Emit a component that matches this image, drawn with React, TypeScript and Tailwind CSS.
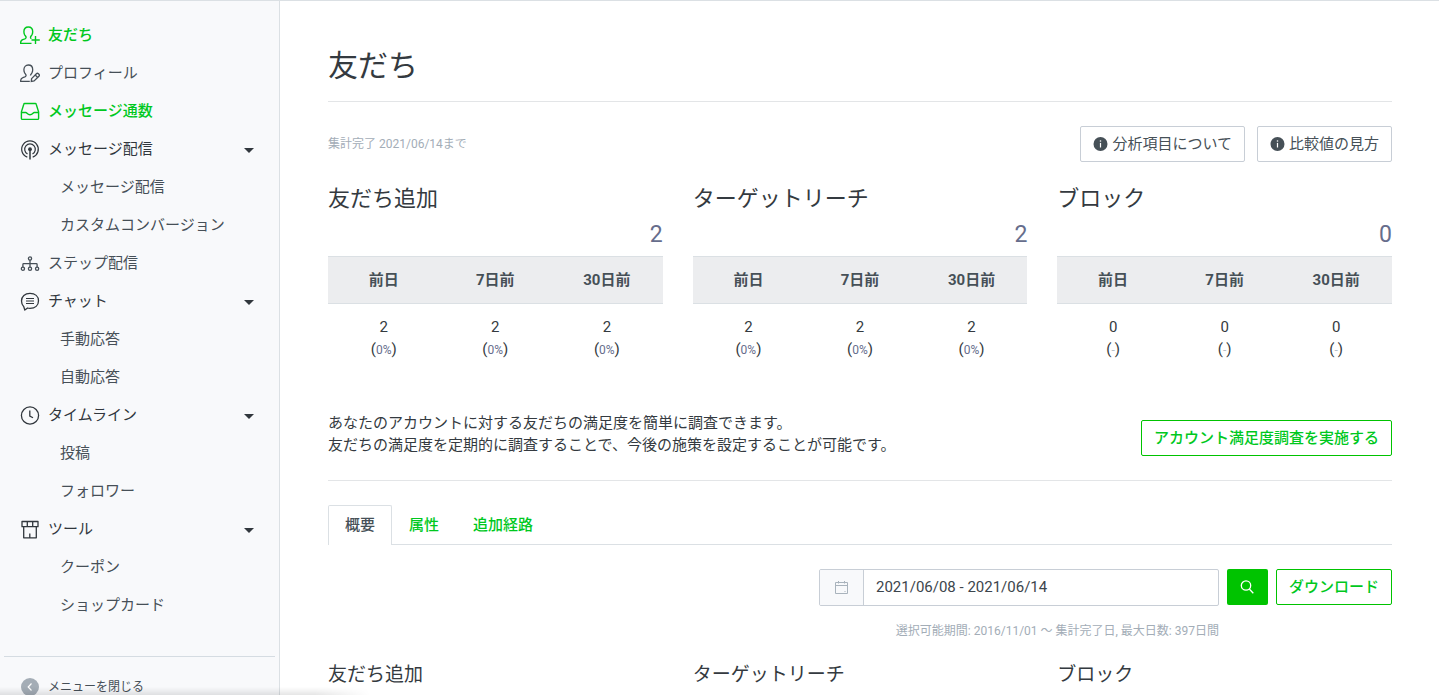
import type { ReactNode } from "react";

type IconProps = { className?: string };

function FriendIcon({ className }: IconProps) {
  return (
    <svg viewBox="0 0 20 20" className={className} fill="none" stroke="currentColor" strokeWidth="1.4">
      <path d="M11.5 17.4H.7v-1.200c0-2 1.300-2.300 3-2.900 1.600-.5 2.400-1 2.400-1.900 0-.9-.7-1.400-1.300-2.300-.6-1-.9-2-.9-3.300C3.900 3 5.700 1 8.300 1s4.400 2 4.400 4.800c0 1.300-.3 2.300-.9 3.300-.6.900-1.300 1.400-1.300 2.300 0 .6.300 1 .9 1.300" />
      <path d="M15.500 10v8M11.500 14h8.300" />
    </svg>
  );
}

function ProfileIcon({ className }: IconProps) {
  return (
    <svg viewBox="0 0 20 20" className={className} fill="none" stroke="currentColor" strokeWidth="1.3">
      <path d="M9.800 17.400H.7v-1.200c0-2 1.300-2.300 3-2.900 1.600-.5 2.400-1 2.400-1.900 0-.9-.7-1.400-1.300-2.300-.6-1-.9-2-.9-3.300C3.900 3 5.700 1 8.300 1s4.400 2 4.400 4.800c0 1.300-.3 2.300-.9 3.300-.6.900-1.300 1.400-1.300 2.300" />
      <path d="M11.600 14.600l4.800-4.800c.6-.6 1.400-.6 2 0l.5.500c.6.600.6 1.400 0 2L14.100 17l-2.800.4z" />
      <path d="M15.200 11l2.500 2.500" />
    </svg>
  );
}

function InboxIcon({ className }: IconProps) {
  return (
    <svg viewBox="0 0 20 20" className={className} fill="none" stroke="currentColor" strokeWidth="1.4" strokeLinejoin="round">
      <path d="M4.700 1.500h10.600c.5 0 .8.300.9.700l2.400 7.700v6.500c0 .6-.4 1-1 1H2.400c-.6 0-1-.4-1-1V9.900l2.400-7.700c.1-.4.400-.7.900-.7z" />
      <path d="M1.600 10.500h4.200c1.200 0 1.500 2.200 4.200 2.200s3-2.200 4.200-2.200h4.200" />
    </svg>
  );
}

function BroadcastIcon({ className }: IconProps) {
  return (
    <svg viewBox="0 0 20 20" className={className} fill="none" stroke="currentColor" strokeWidth="1.200">
      <path d="M7.300 17.100a8.300 8.300 0 1 1 5.400 0" />
      <path d="M7.500 13.900a5.300 5.300 0 1 1 5 0" />
      <path d="M10 9v10.500" strokeWidth="1.500" />
      <circle cx="10" cy="9.200" r="1.900" fill="currentColor" stroke="none" />
    </svg>
  );
}

function StepIcon({ className }: IconProps) {
  return (
    <svg viewBox="0 0 20 20" className={className} fill="none" stroke="currentColor" strokeWidth="1.300">
      <circle cx="10" cy="4.500" r="1.600" />
      <circle cx="2.900" cy="14.700" r="1.600" />
      <circle cx="10" cy="14.700" r="1.600" />
      <circle cx="17.100" cy="14.700" r="1.600" />
      <path d="M10 6.100v7M2.900 13.100V10.400c0-.5.300-.8.800-.8h12.600c.5 0 .8.300.8.800v2.700" />
    </svg>
  );
}

function ChatIcon({ className }: IconProps) {
  return (
    <svg viewBox="0 0 20 20" className={className} fill="none" stroke="currentColor" strokeWidth="1.300" strokeLinejoin="round">
      <path d="M3.800 14.700C2.300 13.300 1.500 11.500 1.500 9c0-4.700 3.400-7.600 8.500-7.600s8.500 2.900 8.500 7.400-3.400 7.500-8.500 7.500c-.9 0-1.700-.1-2.400-.3l-2.800 2.100z" />
      <path d="M6 6.500h8M6 9h8M6 11.500h8" strokeWidth="1" />
    </svg>
  );
}

function ClockIcon({ className }: IconProps) {
  return (
    <svg viewBox="0 0 20 20" className={className} fill="none" stroke="currentColor" strokeWidth="1.300">
      <circle cx="10" cy="9.500" r="8.600" />
      <path d="M9.800 4.500v5.600l3.200 1.700" />
    </svg>
  );
}

function ShopIcon({ className }: IconProps) {
  return (
    <svg viewBox="0 0 20 20" className={className} fill="none" stroke="currentColor" strokeWidth="1.300" strokeLinejoin="round">
      <path d="M2 1.500h16v5.200H2zM7.300 1.500v5.200M12.700 1.500v5.200" />
      <path d="M3.700 6.700V17.800h12.600V6.700M9.800 17.500v-4" />
    </svg>
  );
}

function InfoIcon({ className }: IconProps) {
  return (
    <svg viewBox="0 0 15 15" className={className}>
      <circle cx="7.500" cy="7" r="7" fill="currentColor" />
      <path d="M7.500 5.900v4.600" stroke="#fff" strokeWidth="1.200" />
      <circle cx="7.500" cy="4" r=".8" fill="#fff" />
    </svg>
  );
}

type MenuItem = {
  label: string;
  icon?: (props: IconProps) => ReactNode;
  active?: boolean;
  children?: string[];
};

const menu: MenuItem[] = [
  { label: "友だち", icon: FriendIcon, active: true },
  { label: "プロフィール", icon: ProfileIcon },
  { label: "メッセージ通数", icon: InboxIcon, active: true },
  {
    label: "メッセージ配信",
    icon: BroadcastIcon,
    children: ["メッセージ配信", "カスタムコンバージョン"],
  },
  { label: "ステップ配信", icon: StepIcon },
  { label: "チャット", icon: ChatIcon, children: ["手動応答", "自動応答"] },
  { label: "タイムライン", icon: ClockIcon, children: ["投稿", "フォロワー"] },
  { label: "ツール", icon: ShopIcon, children: ["クーポン", "ショップカード"] },
];

const stats = [
  { title: "友だち追加", total: 2, rate: "0%" },
  { title: "ターゲットリーチ", total: 2, rate: "0%" },
  { title: "ブロック", total: 0, rate: "-" },
];

const periods = ["前日", "7日前", "30日前"];

function Sidebar() {
  return (
    <aside className="flex w-[280px] shrink-0 flex-col border-r border-[#dbe0e4] bg-[#f8f9fb] pt-[15px]">
      <nav>
        <ul>
          {menu.map(({ label, icon: Icon, active, children }) => (
            <li key={label}>
              {children ? (
                <button
                  type="button"
                  aria-expanded="true"
                  className="flex h-[38px] w-full items-center gap-2 pr-[25px] pl-5 text-left text-[#31373d]">
                  {Icon && <Icon className="mt-0.5 size-5 shrink-0" />}
                  <span className="flex-1">{label}</span>
                  <svg viewBox="0 0 10 5" className="mt-[3px] h-[5px] w-[10px]" fill="currentColor">
                    <path d="M0 0h10L5 5z" />
                  </svg>
                </button>
              ) : (
                <a
                  href="#"
                  className={`flex h-[38px] items-center gap-2 pl-5 ${active ? "font-medium text-[#00c81e]" : "text-[#464f57]"}`}>
                  {Icon && <Icon className="mt-0.5 size-5 shrink-0" />}
                  {label}
                </a>
              )}
              {children && (
                <ul>
                  {children.map((child) => (
                    <li key={child}>
                      <a href="#" className="flex h-[38px] items-center pl-[60px] text-[#464f57]">
                        {child}
                      </a>
                    </li>
                  ))}
                </ul>
              )}
            </li>
          ))}
        </ul>
      </nav>
      <div className="mx-1 mt-8 border-t border-[#d5dce2] pt-[19px]">
        <button type="button" className="flex items-center gap-2 pl-4 text-[12px] text-[#464f57]">
          <svg viewBox="0 0 20 20" className="size-5">
            <circle cx="10" cy="10" r="9" fill="#a4adb6" />
            <path d="M11.500 6.500L8.200 10l3.300 3.500" fill="none" stroke="#fff" strokeWidth="1.200" />
          </svg>
          メニューを閉じる
        </button>
      </div>
    </aside>
  );
}

function StatCard({ title, total, rate }: (typeof stats)[number]) {
  return (
    <section>
      <h2 className="text-[22px] leading-7">{title}</h2>
      <p className="mt-2 text-right text-[23px] leading-7 text-[#666d8c]">{total}</p>
      <table className="mt-[7px] w-full table-fixed text-center">
        <thead>
          <tr className="h-[47px] border-y border-[#dbe0e4] bg-[#ecedef] text-[#465057]">
            {periods.map((p) => (
              <th key={p} className="font-bold">
                {p}
              </th>
            ))}
          </tr>
        </thead>
        <tbody>
          <tr>
            {periods.map((p) => (
              <td key={p} className="py-3">
                {total}
                <br />(
                <span className={`text-[12px] ${rate === "-" ? "text-[#b7bfc7]" : "text-[#666d8c]"}`}>{rate}</span>)
              </td>
            ))}
          </tr>
        </tbody>
      </table>
    </section>
  );
}

export default function App() {
  return (
    <div className="relative flex h-screen overflow-hidden border-t border-[#dbe0e4] bg-white font-['Roboto','Noto_Sans_CJK_JP',sans-serif] text-[15px] leading-[22px] text-[#343a40]">
      <Sidebar />

      <main className="min-w-0 flex-1 pr-[47px] pl-12">
        <h1 className="border-b border-[#e3e5e7] pt-[47px] pb-[17px] text-[30px] leading-9">友だち</h1>

        <div className="mt-6 flex items-center justify-between">
          <p className="text-[12px] text-[#a3adb7]">集計完了 2021/06/14まで</p>
          <div className="flex gap-3">
            {["分析項目について", "比較値の見方"].map((label) => (
              <button
                key={label}
                type="button"
                className="flex h-9 items-center gap-1 rounded-xs border border-[#c8ced6] px-3 text-[#465057]">
                <InfoIcon className="size-[15px]" />
                {label}
              </button>
            ))}
          </div>
        </div>

        <div className="mt-[23px] grid grid-cols-3 gap-[30px]">
          {stats.map((s) => (
            <StatCard key={s.title} {...s} />
          ))}
        </div>

        <div className="mt-[39px] flex items-end justify-between border-b border-[#e3e5e7] pb-6">
          <p>
            あなたのアカウントに対する友だちの満足度を簡単に調査できます。
            <br />
            友だちの満足度を定期的に調査することで、今後の施策を設定することが可能です。
          </p>
          <button
            type="button"
            className="h-9 rounded-xs border border-[#00c300] px-3 font-medium text-[#00c81e]">
            アカウント満足度調査を実施する
          </button>
        </div>

        <div role="tablist" className="mt-6 flex h-10 border-b border-[#dbe0e4]">
          <button
            type="button"
            role="tab"
            aria-selected="true"
            className="-mb-px rounded-t-xs border border-b-0 border-[#dbe0e4] bg-white px-4 pb-px font-medium text-[#465057]">
            概要
          </button>
          <button type="button" role="tab" aria-selected="false" className="px-[17px] font-medium text-[#00c81e]">
            属性
          </button>
          <button type="button" role="tab" aria-selected="false" className="px-[17px] font-medium text-[#00c81e]">
            追加経路
          </button>
        </div>

        <form className="mt-6 flex items-start justify-end gap-2" onSubmit={(e) => e.preventDefault()}>
          <div className="w-[400px]">
            <div className="flex h-[37px] overflow-hidden rounded-xs border border-[#c8ced6]">
              <label
                htmlFor="period"
                aria-label="期間"
                className="flex w-11 items-center justify-center border-r border-[#c8ced6] bg-[#f8f9fb] text-[#a9b3bc]">
                <svg viewBox="0 0 14 14" className="size-[14px]" fill="none" stroke="currentColor">
                  <path d="M1.500 1.500h12v11h-12zM1.500 4.500h12M4.500 0v2.500M10.500 0v2.500M10.500 10.500h1" />
                </svg>
              </label>
              <input
                id="period"
                type="text"
                defaultValue="2021/06/08 - 2021/06/14"
                className="min-w-0 flex-1 px-3 pb-px text-[#3c454c] outline-none"
              />
            </div>
            <p className="mt-[14px] text-right text-[12px] text-[#a3adb7]">
              選択可能期間: 2016/11/01 〜 集計完了日, 最大日数: 397日間
            </p>
          </div>
          <button
            type="submit"
            aria-label="検索"
            className="flex h-9 w-[41px] items-center justify-center rounded-xs bg-[#00c300] text-white">
            <svg viewBox="0 0 14 14" className="size-[14px]" fill="none" stroke="currentColor" strokeWidth="1.300">
              <circle cx="6" cy="5.500" r="4.700" />
              <path d="M9.300 9l4 4.200" />
            </svg>
          </button>
          <button
            type="button"
            className="h-9 rounded-xs border border-[#00c300] px-3 font-medium text-[#00c81e]">
            ダウンロード
          </button>
        </form>

        <div className="mt-[21px] grid grid-cols-3 gap-[30px]">
          {stats.map((s) => (
            <h3 key={s.title} className="border-b border-[#eceef0] pb-2 text-[19px] leading-6">
              {s.title}
            </h3>
          ))}
        </div>
      </main>

      <div className="pointer-events-none absolute bottom-0 left-0 h-2 w-[370px] bg-linear-to-t from-black/10 to-transparent mask-r-from-85%" />
    </div>
  );
}
